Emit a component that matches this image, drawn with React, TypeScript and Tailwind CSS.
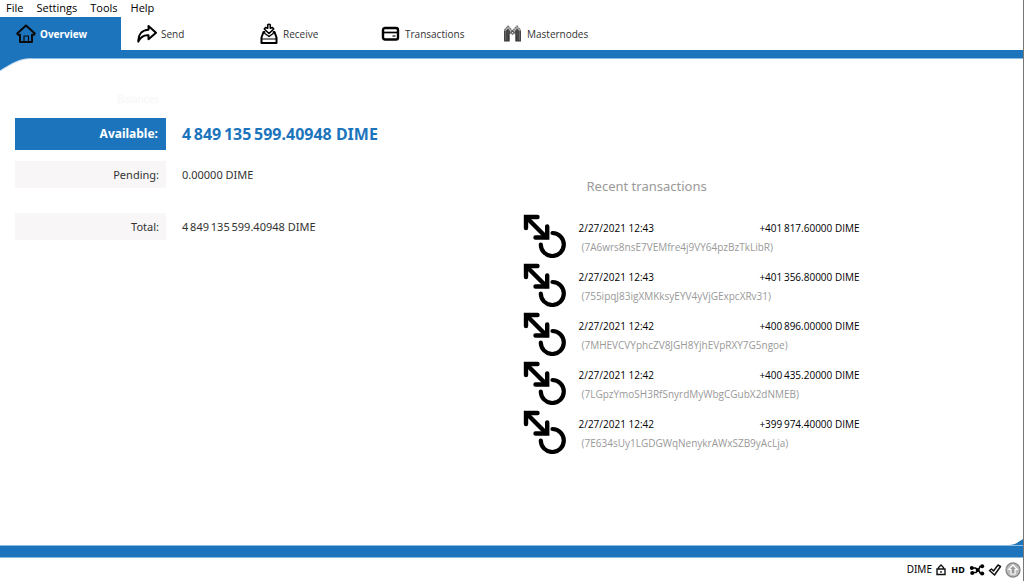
import type { ReactNode } from 'react';

const menus = ['File', 'Settings', 'Tools', 'Help'];

const HomeIcon = () => (
  <svg viewBox="0 0 20 20" className="size-5" fill="none" stroke="#0a0a0a" strokeWidth="2" strokeLinejoin="round" strokeLinecap="round" aria-hidden="true">
    <path d="M1.2 9.5 10 1.4l8.800 8.100-1 1.300H16v7.200H4v-7.200H2.200z" />
    <path d="M8 18v-6h4.500v6" strokeWidth="1.200" />
  </svg>
);

const SendIcon = () => (
  <svg viewBox="0 0 20 20" className="size-5" fill="none" stroke="#000" strokeWidth="2" strokeLinejoin="round" aria-hidden="true">
    <path d="M11.500 2 19 8.800l-7.500 6.400v-4C7 10.800 3.500 13 1.300 17.600 1 11 4.500 6.200 11.500 5.800z" />
  </svg>
);

const ReceiveIcon = () => (
  <svg viewBox="0 0 20 22" className="h-[22px] w-5" fill="none" stroke="#000" strokeWidth="2" strokeLinejoin="round" strokeLinecap="round" aria-hidden="true">
    <path d="M5.500 9H4.500L2.500 14.500v5.500h15v-5.500L15.500 9h-1" />
    <path d="M2.500 16h15" strokeWidth="1.200" />
    <path d="M8.700 1.800c.4-.8 2.200-.8 2.600 0v3.400L13.500 4.500l1.200 1.500L10 10.500 5.300 6l1.200-1.500 2.200.7z" strokeWidth="1.600" />
    <path d="m5.800 10.500 4.200 3 4.200-3" strokeWidth="1.400" />
  </svg>
);

const CardIcon = () => (
  <svg viewBox="0 0 20 20" className="size-5" fill="none" stroke="#000" aria-hidden="true">
    <rect x="2" y="4" width="15" height="11.500" rx="2" strokeWidth="2.400" />
    <path d="M2 8.500h15" strokeWidth="1.700" />
    <path d="M11.500 12h3" strokeWidth="1.200" />
  </svg>
);

const MasternodeIcon = () => (
  <svg viewBox="0 0 20 20" className="size-5" aria-hidden="true">
    <path d="M1.500 17V6L5 1.500 8.500 5v5l-2 1v6zM17.500 17V6L14 1.500 10.500 5v5l2 1v6z" fill="#b5b5b5" />
    <path d="M2.500 17V7l2.500-2.500L7 7v3l-1 1v6zM16.500 17V7L14 4.500 12 7v3l1 1v6z" fill="#484848" />
    <path d="m1.500 6 3.500-4 4.500 5 4.500-5 3.500 4" fill="none" stroke="#777" strokeWidth="1.200" strokeDasharray="2 .6" />
    <path d="M7 8.500 9.500 6 12 8.500 9.500 11z" fill="#555" />
    <path d="M8.800 8h1.400v1.400H8.800z" fill="#ddd" />
    <path d="M1.700 6.500V17h4.300v-6M17.300 6.500V17H13v-6" fill="none" stroke="#333" strokeWidth="1.200" />
  </svg>
);

const tabs: { label: string; icon: ReactNode }[] = [
  { label: 'Send', icon: <SendIcon /> },
  { label: 'Receive', icon: <ReceiveIcon /> },
  { label: 'Transactions', icon: <CardIcon /> },
  { label: 'Masternodes', icon: <MasternodeIcon /> },
];

const transactions = [
  { date: '2/27/2021 12:43', amount: '+401\u2009817.60000 DIME', address: '(7A6wrs8nsE7VEMfre4j9VY64pzBzTkLibR)' },
  { date: '2/27/2021 12:43', amount: '+401\u2009356.80000 DIME', address: '(755ipqJ83igXMKksyEYV4yVjGExpcXRv31)' },
  { date: '2/27/2021 12:42', amount: '+400\u2009896.00000 DIME', address: '(7MHEVCVYphcZV8JGH8YjhEVpRXY7G5ngoe)' },
  { date: '2/27/2021 12:42', amount: '+400\u2009435.20000 DIME', address: '(7LGpzYmoSH3RfSnyrdMyWbgCGubX2dNMEB)' },
  { date: '2/27/2021 12:42', amount: '+399\u2009974.40000 DIME', address: '(7E634sUy1LGDGWqNenykrAWxSZB9yAcLja)' },
];

const StakeIcon = () => (
  <svg viewBox="0 0 44 44" className="size-11 shrink-0" fill="none" stroke="#000" strokeWidth="4" strokeLinecap="round" aria-hidden="true">
    <path d="M4 4l19 19" strokeWidth="4.500" />
    <path d="M3 14V3h11.500" strokeLinejoin="miter" strokeWidth="4.400" />
    <path d="M24.200 12.500V23.500H12.500" strokeLinejoin="miter" strokeWidth="4.400" />
    <path d="M29.500 19a11.500 11.500 0 1 1-11.700 11.500" strokeWidth="4.200" />
  </svg>
);

function Balances() {
  return (
    <section className="pl-[15px] pt-8 text-[#333]">
      <h2 className="w-[151px] pr-[7px] text-right text-[10px] leading-4 text-[#f6f6f6]">Balances</h2>
      <dl className="mt-[11px] grid grid-cols-[151px_auto] items-center gap-x-4 text-[11px]">
        <dt className="h-8 bg-[#1c75bc] pr-2 text-right text-[12px] leading-8 font-bold text-white">Available:</dt>
        <dd className="text-[16px] leading-8 font-bold text-[#1c75bc]">4&#8201;849&#8201;135&#8201;599.40948 DIME</dd>
        <dt className="mt-[11px] h-[27px] bg-[#f8f6f6] pr-[7px] text-right leading-[27px]">Pending:</dt>
        <dd className="mt-[11px] leading-[27px]">0.00000 DIME</dd>
        <dt className="mt-[25px] h-[27px] bg-[#f8f6f6] pr-[7px] text-right leading-[27px]">Total:</dt>
        <dd className="mt-[25px] leading-[27px]">4&#8201;849&#8201;135&#8201;599.40948 DIME</dd>
      </dl>
    </section>
  );
}

function RecentTransactions() {
  return (
    <section className="pl-[11px] pt-[117px]">
      <h2 className="pl-16 text-[13px] leading-5 text-[#999]">Recent transactions</h2>
      <ul className="mt-[18px] max-w-[337px] font-['Open_Sans',sans-serif] text-[10px]">
        {transactions.map((t) => (
          <li key={t.address} className="flex h-[49px] items-start gap-3">
            <StakeIcon />
            <div className="min-w-0 flex-1 pt-1">
              <div className="flex justify-between leading-5 text-black">
                <span>{t.date}</span>
                <span>{t.amount}</span>
              </div>
              <div className="pl-[3px] leading-[18px] text-[#999]">{t.address}</div>
            </div>
          </li>
        ))}
      </ul>
    </section>
  );
}

function StatusBar() {
  return (
    <footer className="flex h-[23px] items-center justify-end gap-[3px] pr-[2px] text-black">
      <span className="text-[10px]">DIME</span>
      <svg viewBox="0 0 12 14" className="h-[14px] w-3" fill="none" stroke="#111" strokeWidth="1.400" aria-label="Wallet locked" role="img">
        <path d="M2 6h8v5.500H2zM3.500 6V4.500L6 2l2.500 2.500V6M6 8v1.800" />
      </svg>
      <span className="w-4 text-center text-[9px] font-bold">HD</span>
      <svg viewBox="0 0 16 14" className="h-[14px] w-4" fill="none" stroke="#000" strokeWidth="1.600" aria-label="Network connections" role="img">
        <path d="M3 5h3.500l3 2L11 3.500h2M3 9.500h4L9.500 7l2 3.500h2" />
        <g fill="#000" stroke="none">
          <circle cx="2.800" cy="5" r="2" />
          <circle cx="3.200" cy="10" r="2" />
          <circle cx="8.500" cy="7" r="1.800" />
          <circle cx="13.200" cy="3.200" r="2" />
          <circle cx="13.200" cy="10.500" r="2" />
        </g>
      </svg>
      <svg viewBox="0 0 14 14" className="size-[14px]" fill="none" stroke="#111" strokeWidth="1.500" strokeLinejoin="round" aria-label="Synchronized" role="img">
        <path d="M1.500 7.500 3.500 6 5.500 8 10 2l2.500 1.500L6.500 12z" />
      </svg>
      <svg viewBox="0 0 16 16" className="size-4" fill="none" aria-label="Staking" role="img">
        <circle cx="8" cy="8" r="7" fill="#bbb" stroke="#888" strokeWidth="1.300" />
        <path d="M8 3 3.800 7.500H6V12h4V7.500h2.200z" fill="#999" stroke="#fff" strokeWidth="1.200" />
      </svg>
    </footer>
  );
}

export default function App() {
  return (
    <div className="flex min-h-screen flex-col border-r border-[#777] bg-white font-['Noto_Sans',sans-serif]">
      <nav aria-label="Menu" className="flex h-[17px] items-start gap-[13px] pl-[6px] font-['Open_Sans',sans-serif] text-[11px] leading-[15px] text-black">
        {menus.map((m) => (
          <button key={m} type="button">{m}</button>
        ))}
      </nav>
      <nav aria-label="Pages" className="flex h-[33px] text-[10px] text-[#333]">
        <button type="button" aria-current="page" className="flex w-[121px] items-center gap-1 bg-[#1c75bc] pt-px pl-4 font-bold text-white">
          <HomeIcon />
          Overview
        </button>
        {tabs.map((t) => (
          <button key={t.label} type="button" className="flex w-[122px] items-center gap-1 pt-px pl-4 font-['Open_Sans',sans-serif]">
            {t.icon}
            {t.label}
          </button>
        ))}
      </nav>
      <div className="h-[9px] border-b border-[#8dbbe0] bg-[#1c75bc]" />
      <main className="relative grid flex-1 grid-cols-2">
        <svg viewBox="0 0 32 14" className="absolute -top-px left-0 h-[14px] w-8" aria-hidden="true">
          <path d="M0 0h32C20 0 12 5 0 12.500z" fill="#1c75bc" />
          <path d="M32 .5C20 .5 12 5.500 0 13" fill="none" stroke="#a9c9e3" strokeWidth=".8" />
        </svg>
        <Balances />
        <RecentTransactions />
        <svg viewBox="0 0 14 6" className="absolute right-0 bottom-0 h-[6px] w-[14px]" aria-hidden="true">
          <path d="M14 0v6H0C6 6 9 3 14 0z" fill="#1c75bc" />
        </svg>
      </main>
      <div className="h-[13px] border-y border-[#8dbbe0] bg-[#1c75bc]" />
      <StatusBar />
    </div>
  );
}
